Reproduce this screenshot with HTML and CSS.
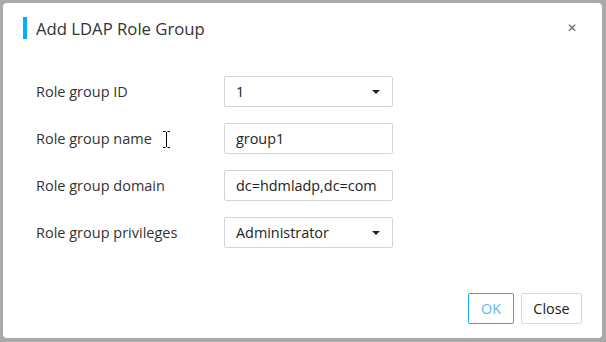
FILE: index.html
```html
<!DOCTYPE html>
<html lang="en">
<head>
    <meta charset="UTF-8">
    <meta name="viewport" content="width=device-width, initial-scale=1.0">
    <title>Add LDAP Role Group</title>
    <link rel="stylesheet" href="styles.css">
</head>
<body>
    <div class="dialog">
        <div class="dialog-header">
            <span class="title-bar"></span>
            <h2 class="title">Add LDAP Role Group</h2>
            <span class="close-x">&#x2715;</span>
        </div>
        <div class="dialog-body">
            <div class="row">
                <label>Role group ID</label>
                <div class="field select">1<span class="caret"></span></div>
            </div>
            <div class="row">
                <label>Role group name</label>
                <div class="field">group1</div>
                <svg class="ibeam" width="7" height="17" viewBox="0 0 7 17">
                    <path d="M0 0.5h2.5M4.5 0.5h2.5M3.5 1v15M0 16.5h2.5M4.5 16.5h2.5" stroke="#000" stroke-width="1" fill="none"/>
                </svg>
            </div>
            <div class="row">
                <label>Role group domain</label>
                <div class="field">dc=hdmladp,dc=com</div>
            </div>
            <div class="row">
                <label>Role group privileges</label>
                <div class="field select">Administrator<span class="caret"></span></div>
            </div>
        </div>
        <div class="dialog-footer">
            <button class="btn btn-primary">OK</button>
            <button class="btn btn-close">Close</button>
        </div>
    </div>
</body>
</html>
```

FILE: styles.css
```css
html, body {
    margin: 0;
    padding: 0;
}
body {
    font-family: 'Open Sans', 'Noto Sans', sans-serif;
    background: #a9a9a9;
    width: 606px;
    height: 342px;
    padding: 3px 4px 4px 3px;
    box-sizing: border-box;
    color: #333;
}
.dialog {
    background: #fff;
    border-radius: 4px;
    height: 100%;
    display: flex;
    flex-direction: column;
}
.dialog-header {
    display: flex;
    align-items: center;
    padding: 14px 25px 0 20px;
    height: 22px;
}
.title-bar {
    width: 4px;
    height: 22px;
    background: #00b0ff;
    margin-right: 9px;
}
.title {
    flex: 1;
    margin: 0;
    font-size: 16.7px;
    font-weight: normal;
    color: #333;
}
.close-x {
    font-size: 12px;
    color: #666;
    font-family: 'DejaVu Sans', sans-serif;
}
.dialog-body {
    flex: 1;
    padding: 37px 0 0 33px;
    display: flex;
    flex-direction: column;
    gap: 16px;
}
.row {
    display: flex;
    align-items: center;
    position: relative;
}
.row label {
    width: 188px;
    font-size: 14.5px;
    color: #333;
}
.field {
    width: 169px;
    height: 31px;
    box-sizing: border-box;
    border: 1px solid #d4d4d4;
    border-radius: 2px;
    padding: 0 11px;
    font-size: 14.4px;
    line-height: 29px;
    color: #222;
    display: flex;
    align-items: center;
    justify-content: space-between;
}
.caret {
    width: 0;
    height: 0;
    border-left: 4px solid transparent;
    border-right: 4px solid transparent;
    border-top: 4px solid #222;
    margin-right: 1px;
}
.ibeam {
    position: absolute;
    left: 127px;
    top: 8px;
}
.dialog-footer {
    display: flex;
    justify-content: flex-end;
    gap: 7px;
    padding: 0 20px 14px 0;
}
.btn {
    font-family: inherit;
    height: 31px;
    padding: 0;
    font-size: 14.4px;
    background: #fff;
    border: 1px solid #d9d9d9;
    border-radius: 2px;
    color: #222;
}
.btn-primary {
    border-color: #1aafff;
    color: #5db6f5;
    width: 46px;
}
.btn-close {
    width: 61px;
}
```
